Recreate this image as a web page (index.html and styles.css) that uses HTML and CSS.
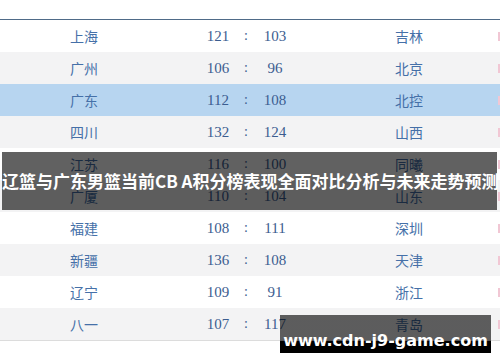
FILE: index.html
```html
<!DOCTYPE html>
<html lang="zh">
<head>
<meta charset="utf-8">
<link rel="stylesheet" href="styles.css">
</head>
<body>
<div class="page">
  <div class="top"></div>
  <div class="table">
    <div class="row"><span class="team">上海</span><span class="num">121</span><span class="colon">:</span><span class="num">103</span><span></span><span class="team">吉林</span><span class="mark"></span></div>
    <div class="row alt"><span class="team">广州</span><span class="num">106</span><span class="colon">:</span><span class="num">96</span><span></span><span class="team">北京</span><span class="mark"></span></div>
    <div class="row hl"><span class="team">广东</span><span class="num">112</span><span class="colon">:</span><span class="num">108</span><span></span><span class="team">北控</span><span class="mark"></span></div>
    <div class="row alt"><span class="team">四川</span><span class="num">132</span><span class="colon">:</span><span class="num">124</span><span></span><span class="team">山西</span><span class="mark"></span></div>
    <div class="row"><span class="team">江苏</span><span class="num">116</span><span class="colon">:</span><span class="num">100</span><span></span><span class="team">同曦</span><span class="mark"></span></div>
    <div class="row alt"><span class="team">广厦</span><span class="num">110</span><span class="colon">:</span><span class="num">104</span><span></span><span class="team">山东</span><span class="mark"></span></div>
    <div class="row"><span class="team">福建</span><span class="num">108</span><span class="colon">:</span><span class="num">111</span><span></span><span class="team">深圳</span><span class="mark"></span></div>
    <div class="row alt"><span class="team">新疆</span><span class="num">136</span><span class="colon">:</span><span class="num">108</span><span></span><span class="team">天津</span><span class="mark"></span></div>
    <div class="row"><span class="team">辽宁</span><span class="num">109</span><span class="colon">:</span><span class="num">91</span><span></span><span class="team">浙江</span><span class="mark"></span></div>
    <div class="row alt last"><span class="team">八一</span><span class="num">107</span><span class="colon">:</span><span class="num">117</span><span></span><span class="team">青岛</span><span class="mark"></span></div>
  </div>
  <div class="title">辽篮与广东男篮当前CB A积分榜表现全面对比分析与未来走势预测</div>
  <div class="watermark">www.cdn-j9-game.com</div>
</div>
</body>
</html>
```

FILE: styles.css
```css
html, body {
  margin: 0;
  padding: 0;
  background: #ffffff;
  overflow: hidden;
}
.page {
  position: relative;
  width: 500px;
  height: 362px;
  overflow: hidden;
}
.top {
  height: 19px;
  border-bottom: 1px solid #4f6b88;
}
.row {
  display: grid;
  grid-template-columns: 126px 44px 12px 46px 97px 103px 3px;
  padding-left: 70px;
  height: 32px;
  align-items: center;
  background: #ffffff;
  color: #3a66a0;
}
.row.alt { background: #f3f3f4; }
.row.hl { background: #b7d5f0; }
.row.last { border-bottom: 1px solid #dcdcdc; }
.team {
  font-family: "Noto Sans CJK SC", "Noto Sans", sans-serif;
  font-size: 14px;
  font-weight: 400;
  color: #4570a8;
}
.num {
  font-family: "Liberation Serif", serif;
  font-size: 15px;
  text-align: center;
  color: #3c5d90;
}
.colon {
  font-family: "Liberation Serif", serif;
  font-size: 14px;
  text-align: center;
  color: #3c5d90;
}
.mark {
  display: block;
  width: 3px;
  height: 9px;
  background: #f1c7d4;
}
.title {
  position: absolute;
  left: 2px;
  top: 152px;
  width: 495px;
  height: 58px;
  background: rgba(0, 0, 0, 0.62);
  color: #ffffff;
  font-family: "Noto Sans CJK SC", "Noto Sans", sans-serif;
  font-weight: 700;
  font-size: 17px;
  line-height: 58px;
  text-align: center;
  white-space: nowrap;
}
.watermark {
  position: absolute;
  left: 280px;
  top: 315px;
  width: 211px;
  height: 38px;
  background: linear-gradient(to bottom, rgba(0,0,0,0.62) 0, rgba(0,0,0,0.62) 26px, #000 26px, #000 100%);
  color: #ffffff;
  font-family: "DejaVu Sans", sans-serif;
  font-weight: 700;
  font-size: 16px;
  line-height: 20px;
  padding-top: 16px;
  box-sizing: border-box;
  text-align: center;
  white-space: nowrap;
}
```
